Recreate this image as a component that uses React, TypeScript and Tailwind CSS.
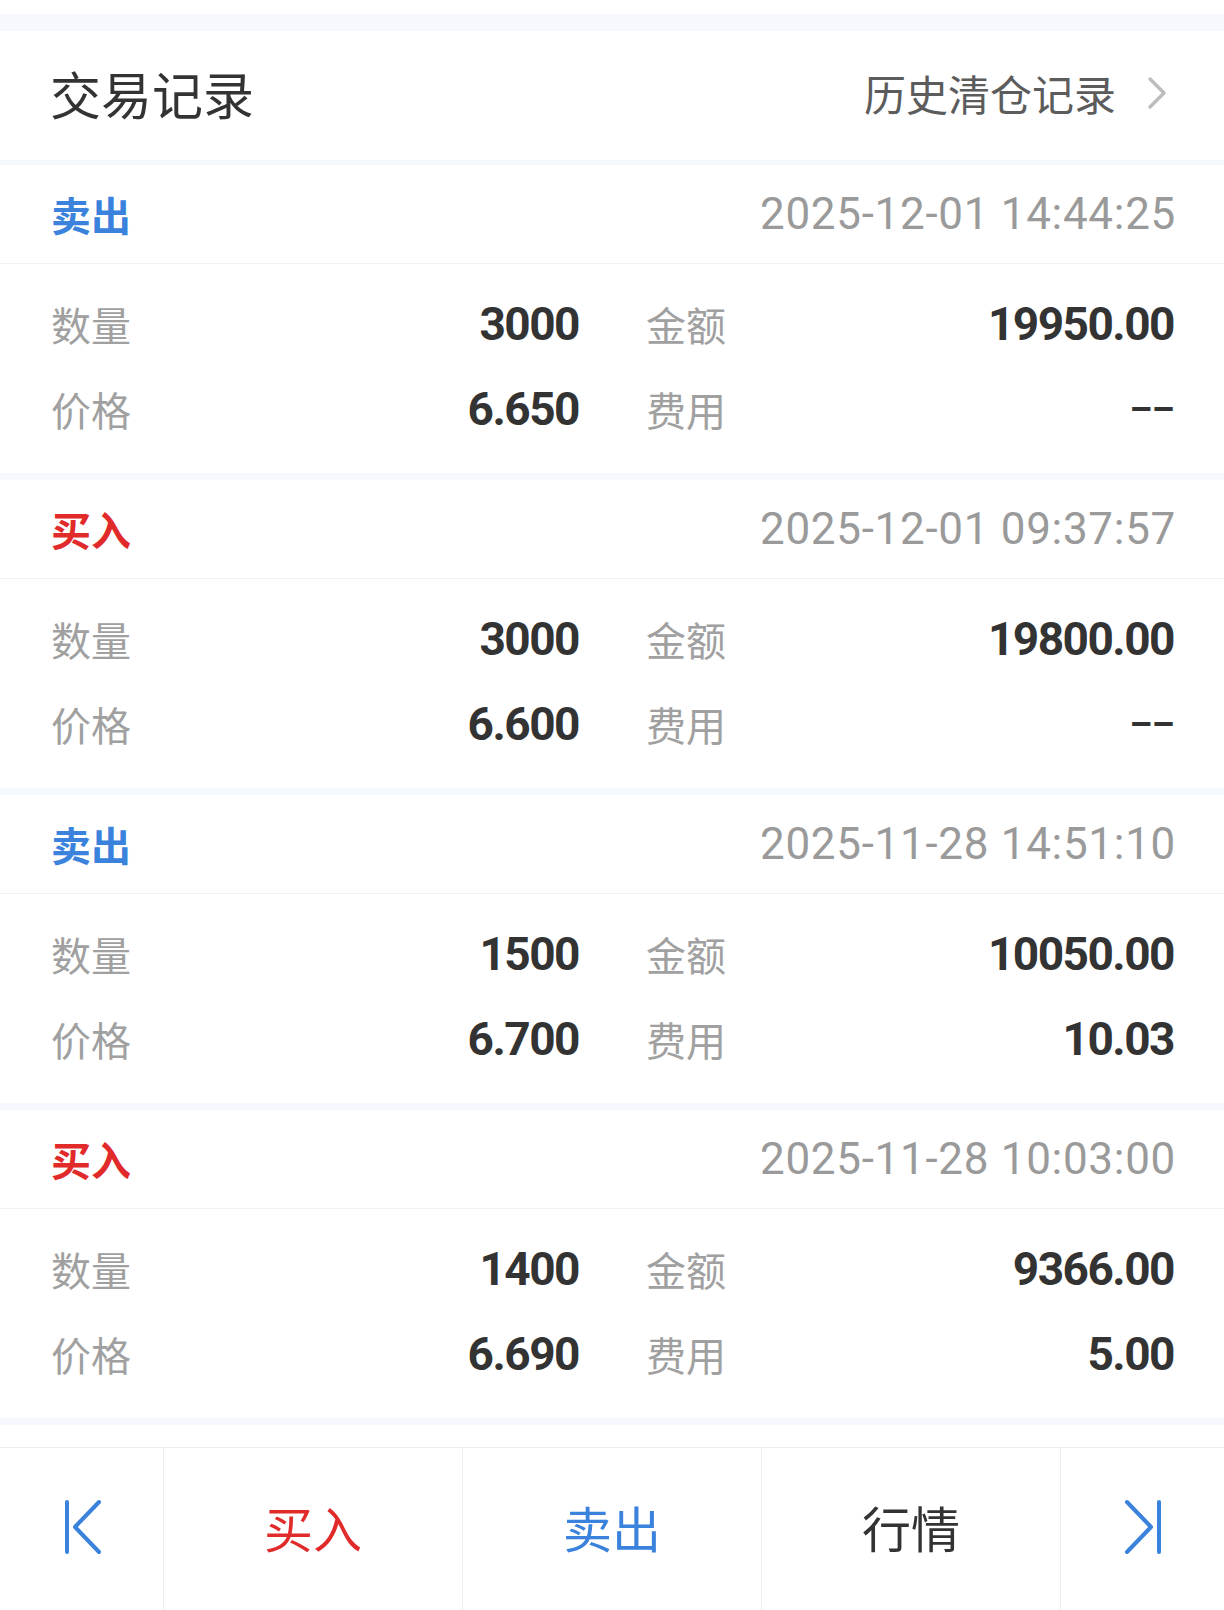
import React from 'react';

type Trade = {
  side: 'buy' | 'sell';
  time: string;
  qty: string;
  price: string;
  amount: string;
  fee: string;
};

const trades: Trade[] = [
  { side: 'sell', time: '2025-12-01 14:44:25', qty: '3000', price: '6.650', amount: '19950.00', fee: '--' },
  { side: 'buy', time: '2025-12-01 09:37:57', qty: '3000', price: '6.600', amount: '19800.00', fee: '--' },
  { side: 'sell', time: '2025-11-28 14:51:10', qty: '1500', price: '6.700', amount: '10050.00', fee: '10.03' },
  { side: 'buy', time: '2025-11-28 10:03:00', qty: '1400', price: '6.690', amount: '9366.00', fee: '5.00' },
];

const cjk = "font-['Noto_Sans_CJK_SC',sans-serif]";
const num = "font-['Roboto','Noto_Sans_CJK_SC',sans-serif]";

const Cell: React.FC<{ label: string; value: string }> = ({ label, value }) => (
  <div className="h-[85px] flex items-center justify-between">
    <span className={`${cjk} text-[40px] leading-none text-[#a0a0a0]`}>{label}</span>
    {value === '--' ? (
      <span className={`${num} text-[36px] leading-none font-bold tracking-[-0.5px] text-[#333333] pt-[2px]`}>––</span>
    ) : (
      <span className={`${num} text-[46px] leading-none font-bold tracking-[-1.5px] text-[#333333]`}>{value}</span>
    )}
  </div>
);

const TradeCard: React.FC<{ t: Trade }> = ({ t }) => (
  <div className="h-[308px] bg-white">
    <div className="h-[99px] border-b border-[#f3f3f3] flex items-center justify-between pl-[51px] pr-[50px]">
      <span
        className={`${cjk} text-[40px] leading-none font-bold ${t.side === 'sell' ? 'text-[#3a82dc]' : 'text-[#e12b2b]'}`}
      >
        {t.side === 'sell' ? '卖出' : '买入'}
      </span>
      <span className={`${num} text-[44px] leading-none text-[#9a9a9a] tracking-[0.7px] -mr-[2px]`}>{t.time}</span>
    </div>
    <div className="grid grid-cols-2 gap-x-[67px] pl-[51px] pr-[50px] pt-[17px]">
      <Cell label="数量" value={t.qty} />
      <Cell label="金额" value={t.amount} />
      <Cell label="价格" value={t.price} />
      <Cell label="费用" value={t.fee} />
    </div>
  </div>
);

const FirstIcon = () => (
  <svg width="38" height="56" viewBox="0 0 38 56" fill="none" stroke="#3a82dc" strokeWidth="4" strokeLinecap="round" strokeLinejoin="round">
    <line x1="3" y1="3" x2="3" y2="53" />
    <polyline points="35,3 11,28 35,53" />
  </svg>
);

const LastIcon = () => (
  <svg width="38" height="56" viewBox="0 0 38 56" fill="none" stroke="#3a82dc" strokeWidth="4" strokeLinecap="round" strokeLinejoin="round">
    <line x1="35" y1="3" x2="35" y2="53" />
    <polyline points="3,3 27,28 3,53" />
  </svg>
);

export default function App() {
  return (
    <div className="w-[1224px] h-[1610px] bg-white flex flex-col overflow-hidden">
      <div className="h-[14px] bg-white shrink-0" />
      <div className="h-[17px] bg-[#f5f8fc] shrink-0" />

      {/* header */}
      <div className="h-[129px] shrink-0 flex items-center justify-between pl-[50px] pr-[56px] pb-[5px]">
        <span className={`${cjk} text-[51px] leading-none text-[#333333]`}>交易记录</span>
        <div className="flex items-center gap-[30px]">
          <span className={`${cjk} text-[42px] leading-none text-[#5c5c5c]`}>历史清仓记录</span>
          <svg width="22" height="34" viewBox="0 0 22 34" fill="none" stroke="#bdbdbd" strokeWidth="3.5" strokeLinecap="round" strokeLinejoin="round">
            <polyline points="4,3 18,17 4,31" />
          </svg>
        </div>
      </div>
      <div className="h-[5px] bg-[#f5f8fc] shrink-0" />

      {trades.map((t, i) => (
        <React.Fragment key={i}>
          <TradeCard t={t} />
          <div className="h-[7px] bg-[#f5f8fc] shrink-0" />
        </React.Fragment>
      ))}

      <div className="flex-1" />

      {/* bottom bar */}
      <div className="h-[163px] shrink-0 border-t border-[#ececec] grid grid-cols-[163px_299px_299px_299px_1fr]">
        <div className="flex items-center justify-center pl-[2px] pb-[4px]">
          <FirstIcon />
        </div>
        <div className={`border-l border-[#efefef] flex items-center justify-center pb-[6px] ${cjk} text-[49px] leading-none text-[#e12b2b]`}>买入</div>
        <div className={`border-l border-[#efefef] flex items-center justify-center pb-[6px] ${cjk} text-[49px] leading-none text-[#3a82dc]`}>卖出</div>
        <div className={`border-l border-[#efefef] flex items-center justify-center pb-[6px] ${cjk} text-[49px] leading-none text-[#333333]`}>行情</div>
        <div className="border-l border-[#efefef] flex items-center justify-center pb-[4px]">
          <LastIcon />
        </div>
      </div>
    </div>
  );
}
